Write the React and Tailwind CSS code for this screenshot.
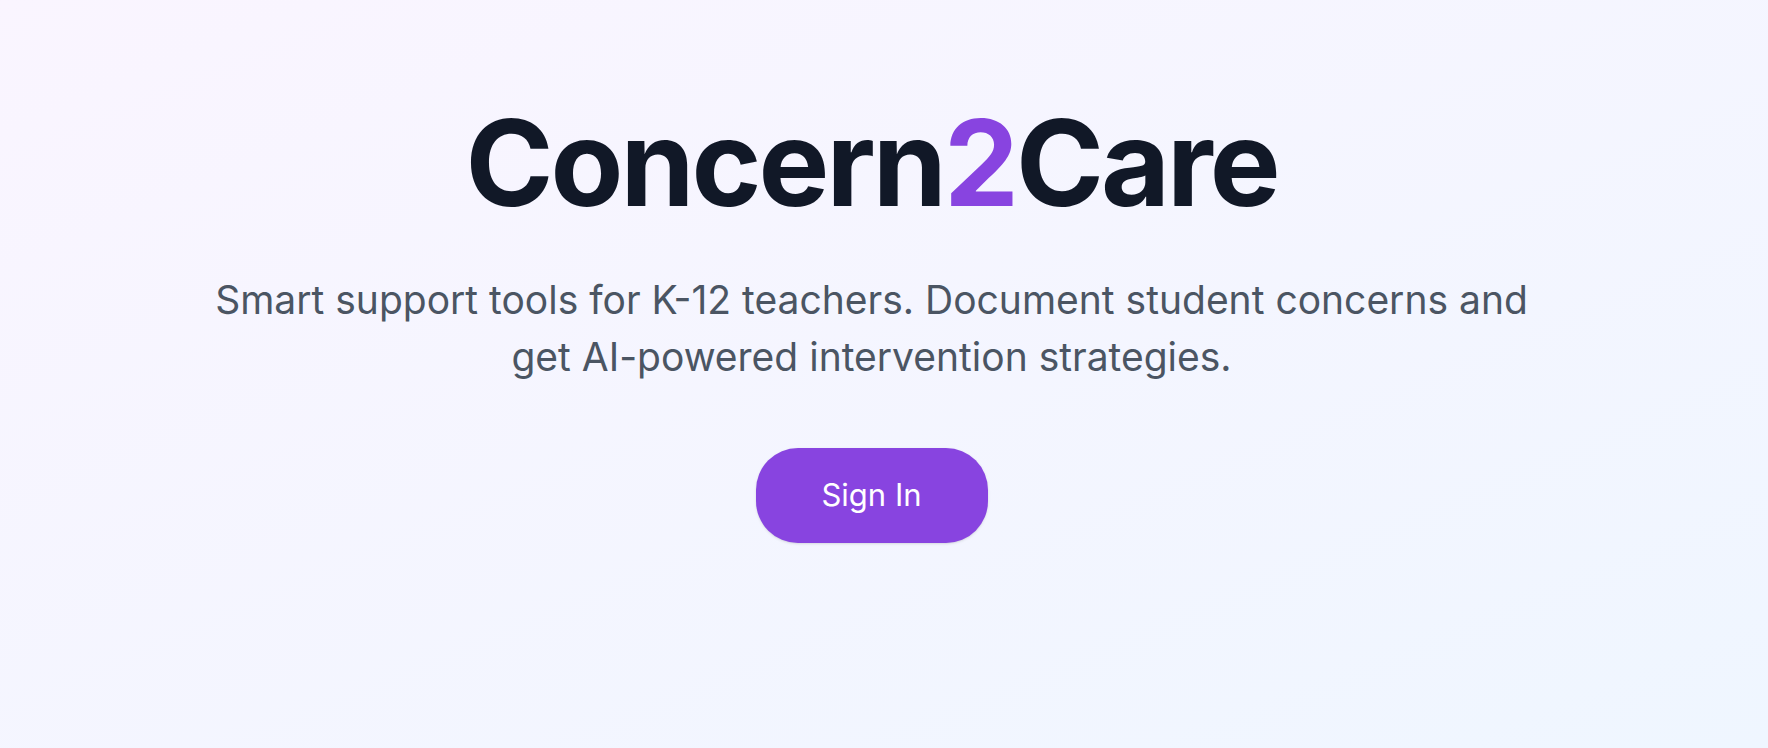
import React from 'react';

export default function App() {
  return (
    <div className="min-h-screen w-full bg-gradient-to-br from-[#faf5ff] to-[#eff6ff] font-['Inter','Noto_Sans',sans-serif]">
      <main className="flex flex-col items-center pl-8 pr-[57px] pt-[98px] text-center">
        {/* ── Brand ── */}
        <h1 className="text-[119px] font-bold leading-[1.1] tracking-tight text-[#111827]">
          Concern<span className="text-[#8844e0]">2</span>Care
        </h1>

        {/* ── Tagline ── */}
        <p className="mt-[42px] max-w-[1340px] text-[39px] leading-[57px] text-[#4b5563]">
          Smart support tools for K-12 teachers. Document student concerns and get AI-powered intervention strategies.
        </p>

        {/* ── CTA ── */}
        <button
          type="button"
          className="mt-[63px] flex h-[95px] w-[232px] items-center justify-center rounded-[42px] bg-[#8844e0] text-[31px] text-white shadow-sm"
        >
          Sign In
        </button>
      </main>
    </div>
  );
}
